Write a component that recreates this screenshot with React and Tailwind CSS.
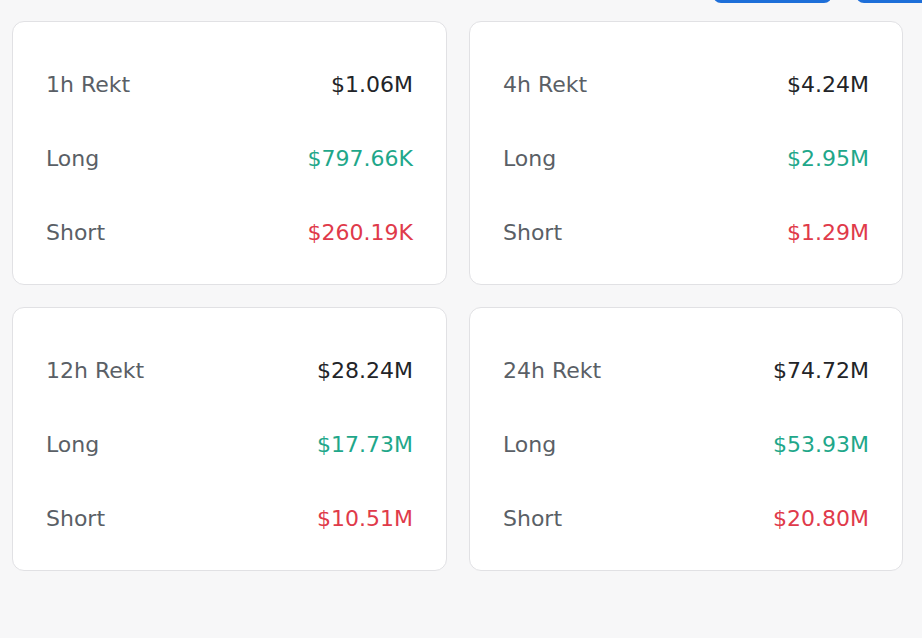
export default function App() {
  const cards = [
    ["1h Rekt", "$1.06M", "$797.66K", "$260.19K"],
    ["4h Rekt", "$4.24M", "$2.95M", "$1.29M"],
    ["12h Rekt", "$28.24M", "$17.73M", "$10.51M"],
    ["24h Rekt", "$74.72M", "$53.93M", "$20.80M"],
  ];
  return (
    <div className="w-[922px] h-[638px] bg-[#f7f7f8] relative overflow-hidden" style={{ fontFamily: '"DejaVu Sans", "Noto Sans", sans-serif' }}>
      <div className="absolute top-[-20px] left-[713px] w-[119px] h-[23px] rounded-[8px] bg-[#1e6fd9]" />
      <div className="absolute top-[-20px] left-[856px] w-[100px] h-[23px] rounded-[8px] bg-[#1e6fd9]" />
      <div className="grid grid-cols-[435px_434px] gap-x-[22px] gap-y-[22px] pl-[12px] pt-[21px]">
        {cards.map(([t, a, l, s]) => (
          <div key={t} className="h-[264px] bg-white border border-[#e1e1e4] rounded-[12px] px-[33px] pt-[50px] flex flex-col gap-[48px] text-[22px] leading-[26px]">
            <div className="flex justify-between"><span className="text-[#5a5f66]">{t}</span><span className="text-[#222428]">{a}</span></div>
            <div className="flex justify-between"><span className="text-[#5a5f66]">Long</span><span className="text-[#1fa78a]">{l}</span></div>
            <div className="flex justify-between"><span className="text-[#5a5f66]">Short</span><span className="text-[#e03a4a]">{s}</span></div>
          </div>
        ))}
      </div>
    </div>
  );
}
